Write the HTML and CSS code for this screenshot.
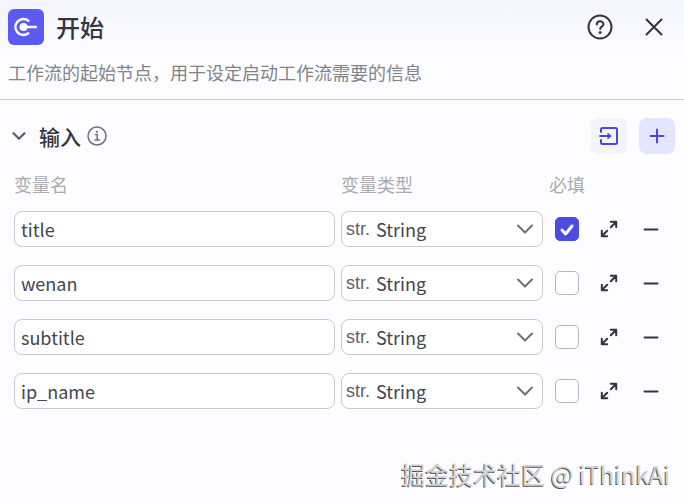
FILE: index.html
```html
<!DOCTYPE html>
<html lang="zh-CN">
<head>
    <meta charset="UTF-8">
    <meta name="viewport" content="width=device-width, initial-scale=1.0">
    <title>开始</title>
    <link rel="stylesheet" href="styles.css">
</head>
<body>
    <svg class="sprite" aria-hidden="true">
        <symbol id="icon-chevron" viewBox="0 0 18 18">
            <path d="M2 5.5l7 7 7-7" />
        </symbol>
        <symbol id="icon-expand" viewBox="0 0 18 18">
            <path d="M10.8 7.2l5-5M10.8 1.8h5.4v5.4M7.2 10.8l-5 5M1.8 10.8v5.4h5.4" />
        </symbol>
        <symbol id="icon-minus" viewBox="0 0 18 18">
            <path d="M2.5 9.5h13" />
        </symbol>
    </svg>

    <header class="header">
        <div class="title-bar">
            <svg class="logo" viewBox="0 0 36 36" aria-hidden="true">
                <rect width="36" height="36" rx="6" fill="#5a5af5" />
                <path d="M20.3 11.7a8 8 0 1 0 0 12.6" fill="none" stroke="#fff" stroke-width="2.4" stroke-linecap="round" />
                <circle cx="15.5" cy="18" r="4" fill="#fff" />
                <path d="M16 18h12" stroke="#fff" stroke-width="2.4" stroke-linecap="round" />
            </svg>
            <h1>开始</h1>
            <button class="icon-button" type="button" aria-label="帮助">
                <svg class="icon icon-help" viewBox="0 0 26 26">
                    <circle cx="13" cy="13" r="11.5" />
                    <path d="M9.8 10.6c0-4.4 6.6-4.1 6.6-.4 0 2.4-3.2 2.4-3.2 4.8" />
                    <circle class="dot" cx="13.1" cy="18.6" r="1.5" />
                </svg>
            </button>
            <button class="icon-button" type="button" aria-label="关闭">
                <svg class="icon icon-close" viewBox="0 0 18 18">
                    <path d="M1.5 1.5l15 15M16.5 1.5l-15 15" />
                </svg>
            </button>
        </div>
        <p class="description">工作流的起始节点，用于设定启动工作流需要的信息</p>
    </header>

    <main class="inputs">
        <div class="section-bar">
            <button class="toggle" type="button" aria-label="收起">
                <svg class="icon icon-toggle"><use href="#icon-chevron" /></svg>
            </button>
            <h2>输入</h2>
            <svg class="icon icon-info" viewBox="0 0 20 20" aria-hidden="true">
                <circle cx="10" cy="10" r="9" />
                <path d="M8.4 8.6h1.8v5.2M8 14h4.4" />
                <circle class="dot" cx="10" cy="5.8" r="1.1" />
            </svg>
            <div class="actions">
                <button class="action" type="button" aria-label="导入">
                    <svg class="icon icon-import" viewBox="0 0 20 20">
                        <path d="M2 6V3.5a1.5 1.5 0 0 1 1.5-1.5h13a1.5 1.5 0 0 1 1.5 1.5v13a1.5 1.5 0 0 1-1.5 1.5h-13a1.5 1.5 0 0 1-1.5-1.5V14" />
                        <path d="M1 10h9" />
                        <path class="dot" d="M8.5 6.5l4.3 3.5-4.3 3.5z" />
                    </svg>
                </button>
                <button class="action action-add" type="button" aria-label="新增">
                    <svg class="icon icon-add" viewBox="0 0 16 16">
                        <path d="M8 1.5v13M1.5 8h13" />
                    </svg>
                </button>
            </div>
        </div>

        <table class="variables">
            <thead>
                <tr>
                    <th class="col-name">变量名</th>
                    <th class="col-type">变量类型</th>
                    <th class="col-required">必填</th>
                    <th class="col-expand"></th>
                    <th class="col-remove"></th>
                </tr>
            </thead>
            <tbody>
                <tr>
                    <td><input class="name" type="text" aria-label="变量名" value="title"></td>
                    <td>
                        <div class="type">
                            <span class="type-icon">str.</span>
                            <select aria-label="变量类型"><option>String</option></select>
                            <svg class="icon icon-arrow"><use href="#icon-chevron" /></svg>
                        </div>
                    </td>
                    <td><input class="required" type="checkbox" aria-label="必填" checked></td>
                    <td><button class="row-button" type="button" aria-label="展开"><svg class="icon icon-expand"><use href="#icon-expand" /></svg></button></td>
                    <td><button class="row-button" type="button" aria-label="删除"><svg class="icon icon-minus"><use href="#icon-minus" /></svg></button></td>
                </tr>
                <tr>
                    <td><input class="name" type="text" aria-label="变量名" value="wenan"></td>
                    <td>
                        <div class="type">
                            <span class="type-icon">str.</span>
                            <select aria-label="变量类型"><option>String</option></select>
                            <svg class="icon icon-arrow"><use href="#icon-chevron" /></svg>
                        </div>
                    </td>
                    <td><input class="required" type="checkbox" aria-label="必填"></td>
                    <td><button class="row-button" type="button" aria-label="展开"><svg class="icon icon-expand"><use href="#icon-expand" /></svg></button></td>
                    <td><button class="row-button" type="button" aria-label="删除"><svg class="icon icon-minus"><use href="#icon-minus" /></svg></button></td>
                </tr>
                <tr>
                    <td><input class="name" type="text" aria-label="变量名" value="subtitle"></td>
                    <td>
                        <div class="type">
                            <span class="type-icon">str.</span>
                            <select aria-label="变量类型"><option>String</option></select>
                            <svg class="icon icon-arrow"><use href="#icon-chevron" /></svg>
                        </div>
                    </td>
                    <td><input class="required" type="checkbox" aria-label="必填"></td>
                    <td><button class="row-button" type="button" aria-label="展开"><svg class="icon icon-expand"><use href="#icon-expand" /></svg></button></td>
                    <td><button class="row-button" type="button" aria-label="删除"><svg class="icon icon-minus"><use href="#icon-minus" /></svg></button></td>
                </tr>
                <tr>
                    <td><input class="name" type="text" aria-label="变量名" value="ip_name"></td>
                    <td>
                        <div class="type">
                            <span class="type-icon">str.</span>
                            <select aria-label="变量类型"><option>String</option></select>
                            <svg class="icon icon-arrow"><use href="#icon-chevron" /></svg>
                        </div>
                    </td>
                    <td><input class="required" type="checkbox" aria-label="必填"></td>
                    <td><button class="row-button" type="button" aria-label="展开"><svg class="icon icon-expand"><use href="#icon-expand" /></svg></button></td>
                    <td><button class="row-button" type="button" aria-label="删除"><svg class="icon icon-minus"><use href="#icon-minus" /></svg></button></td>
                </tr>
            </tbody>
        </table>
    </main>

    <footer class="watermark">掘金技术社区 @ iThinkAi</footer>
</body>
</html>
```

FILE: styles.css
```css
* { box-sizing: border-box; }

body {
    margin: 0;
    min-height: 100vh;
    display: flex;
    flex-direction: column;
    font-family: "Noto Sans CJK SC", sans-serif;
    color: #33363e;
    background-color: #fdfdff;
}

h1, h2, p { margin: 0; }

button {
    display: flex;
    align-items: center;
    justify-content: center;
    padding: 0;
    border: none;
    background: none;
    color: inherit;
    cursor: pointer;
}

.sprite { display: none; }

.icon {
    display: block;
    flex-shrink: 0;
    fill: none;
    stroke: currentColor;
    stroke-width: 2;
    stroke-linecap: round;
    stroke-linejoin: round;
}

.icon .dot {
    fill: currentColor;
    stroke: none;
}

/* header */
.header {
    height: 100px;
    padding: 9px 12px 0 8px;
    border-bottom: 1px solid #cdced4;
    background: linear-gradient(#f4f4ff, #fdfdff 60px);
}

.title-bar {
    display: flex;
    align-items: center;
    height: 36px;
}

.logo {
    width: 36px;
    height: 36px;
}

h1 {
    flex: 1;
    margin-left: 12px;
    font-size: 24px;
    font-weight: 500;
    line-height: 36px;
}

.icon-button {
    width: 36px;
    height: 36px;
    margin-left: 18px;
}

.icon-help {
    width: 26px;
    height: 26px;
}

.icon-close {
    width: 18px;
    height: 18px;
}

.description {
    margin-top: 13px;
    font-size: 18px;
    line-height: 28px;
    color: #80838a;
}

/* input section */
.inputs {
    flex: 1;
    padding: 18px 15px 0 14px;
}

.section-bar {
    display: flex;
    align-items: center;
    height: 36px;
    margin-right: -6px;
}

.toggle {
    width: 10px;
    margin-right: 15px;
    color: #5c5f67;
}

.icon-toggle {
    width: 14px;
    height: 14px;
    stroke-width: 3;
}

h2 {
    font-size: 21px;
    font-weight: 500;
    line-height: 36px;
}

.icon-info {
    width: 20px;
    height: 20px;
    margin-left: 6px;
    color: #6d7078;
    stroke-width: 1.5;
}

.actions {
    display: flex;
    gap: 12px;
    margin-left: auto;
}

.action {
    width: 36px;
    height: 36px;
    border-radius: 8px;
    color: #4e47d6;
    background-color: #f3f3fa;
}

.action-add { background-color: #e4e5ff; }

.icon-import {
    width: 20px;
    height: 20px;
}

.icon-add {
    width: 16px;
    height: 16px;
}

/* variable table */
.variables {
    width: 100%;
    table-layout: fixed;
    border-collapse: collapse;
}

.variables th {
    height: 48px;
    padding: 16px 0 4px;
    font-size: 18px;
    font-weight: 400;
    line-height: 28px;
    text-align: left;
    color: #a9abb0;
}

.variables td {
    height: 54px;
    padding: 0;
}

.variables .col-type { width: 208px; }
.variables .col-required { width: 36px; }
.variables .col-expand { width: 48px; }
.variables .col-remove { width: 36px; }

.name, .type {
    display: flex;
    align-items: center;
    height: 36px;
    border: 1px solid #c9cad0;
    border-radius: 8px;
    background-color: #fff;
}

.name {
    width: calc(100% - 6px);
    padding: 0 6px;
    font: inherit;
    font-size: 18px;
    color: #43464d;
}

.type {
    width: 202px;
    padding: 0 8px 0 4px;
}

.type-icon {
    width: 24px;
    font-family: "Liberation Sans", sans-serif;
    font-size: 18px;
    line-height: 28px;
    color: #5f6269;
}

.type select {
    flex: 1;
    min-width: 0;
    padding: 0 0 0 6px;
    border: none;
    appearance: none;
    background: none;
    font: inherit;
    font-size: 18px;
    color: #43464d;
}

.icon-arrow {
    width: 18px;
    height: 18px;
    color: #6d7078;
}

.required {
    display: block;
    width: 24px;
    height: 24px;
    margin: 0 auto;
    appearance: none;
    border: 1px solid #b4b6bd;
    border-radius: 5px;
    background-color: #fff;
}

.required:checked {
    border-color: #4d4be0;
    background: #4d4be0 url("data:image/svg+xml,%3Csvg xmlns='http://www.w3.org/2000/svg' viewBox='0 0 22 22'%3E%3Cpath d='M6 12l3.6 4 6.400-8' fill='none' stroke='white' stroke-width='3' stroke-linecap='round' stroke-linejoin='round'/%3E%3C/svg%3E") center no-repeat;
}

.row-button {
    width: 24px;
    height: 24px;
    margin: 0 auto;
}

.icon-expand, .icon-minus {
    width: 18px;
    height: 18px;
}

.watermark {
    padding: 0 14px 12px 0;
    text-align: right;
    font-size: 24px;
    line-height: 36px;
    color: #d4d4d6;
    text-shadow: -1px 1px 0 #555;
}
```
